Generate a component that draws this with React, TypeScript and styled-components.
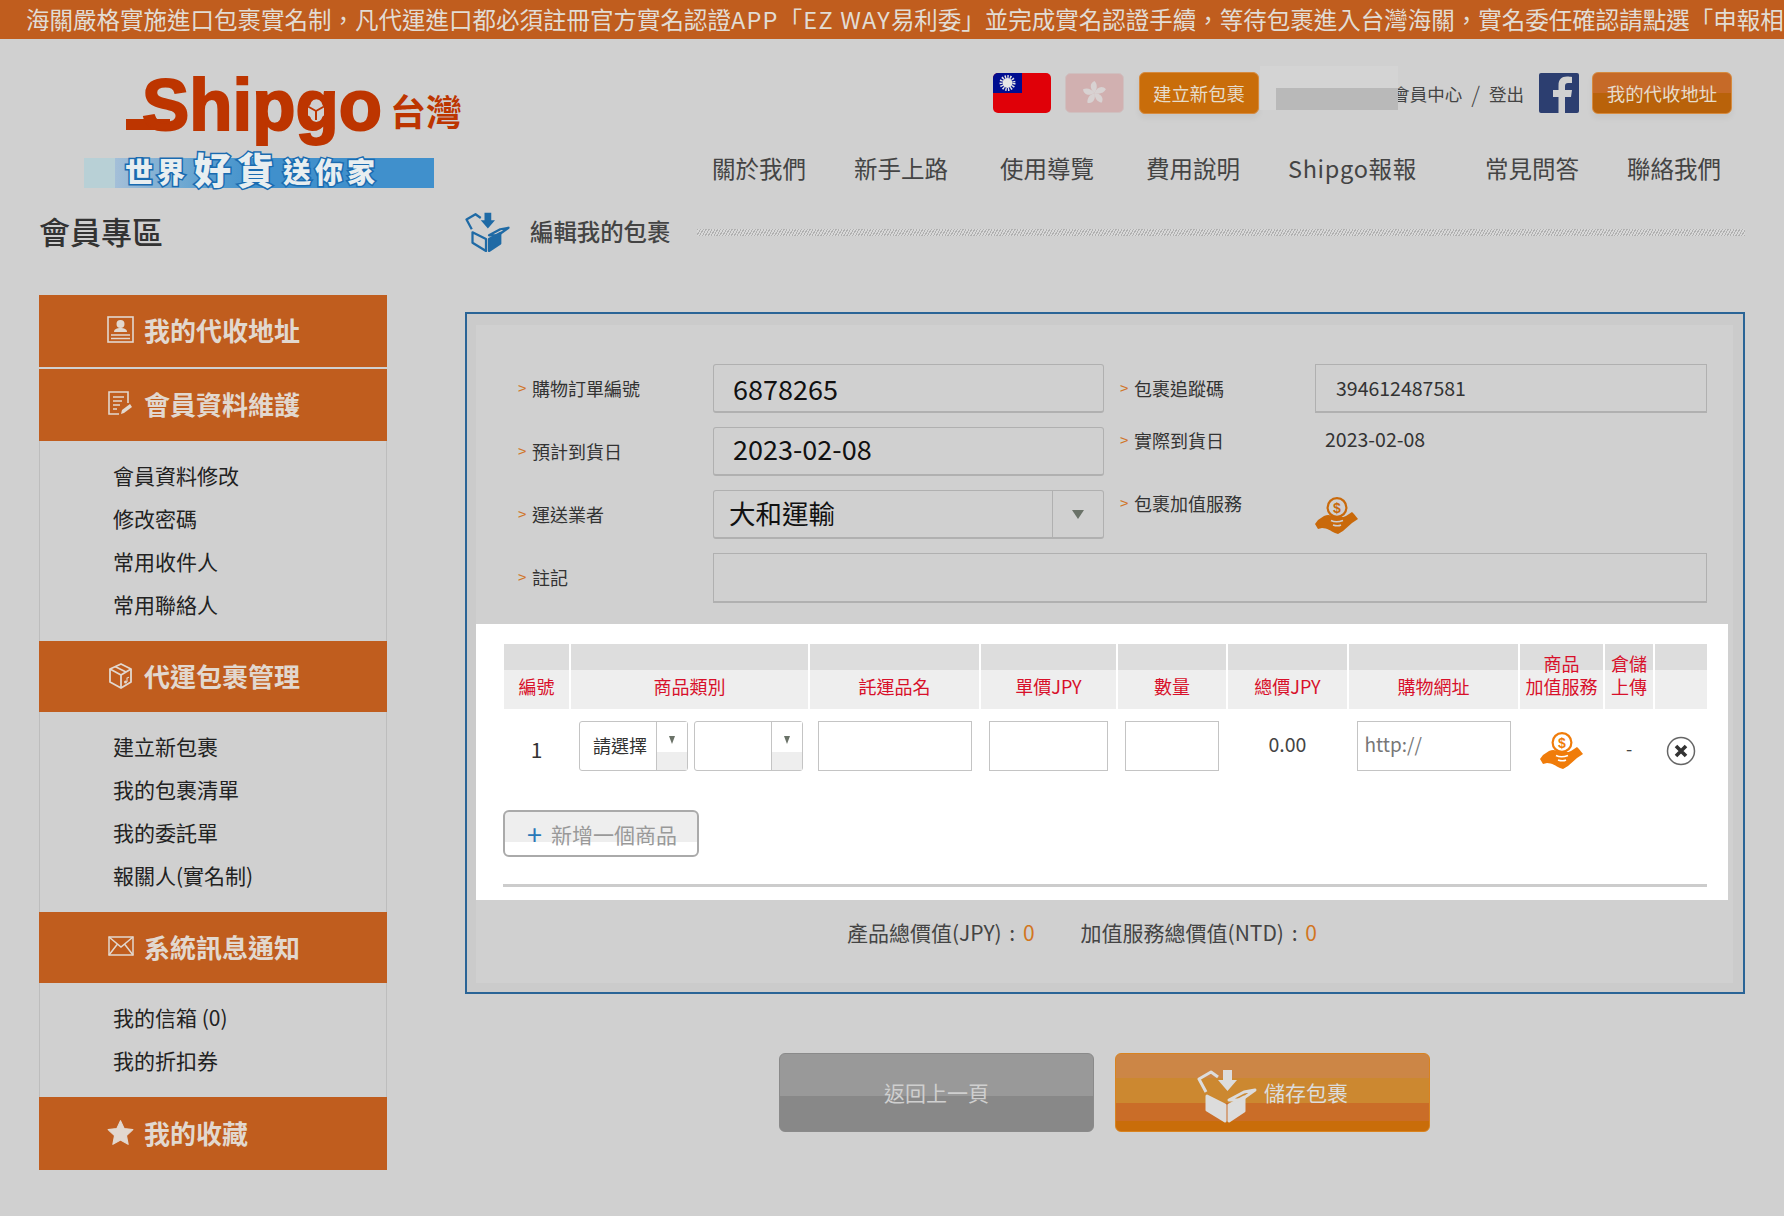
import { FC } from 'react';
import styled, { createGlobalStyle } from 'styled-components';

const cjk = '"Noto Sans CJK TC", "Noto Sans", sans-serif';
const orange = '#c05d1e';

const GlobalStyle = createGlobalStyle`
  html, body {
    margin: 0;
    padding: 0;
    background: #d0d0d0;
    font-family: ${ cjk };
    color: #333;
  }
  * {
    box-sizing: border-box;
  }
`;

const menu = [
  { icon: 'card', title: '我的代收地址', height: 72, items: [] },
  { icon: 'edit', title: '會員資料維護', height: 72, items: [ '會員資料修改', '修改密碼', '常用收件人', '常用聯絡人' ] },
  { icon: 'box', title: '代運包裹管理', height: 71, items: [ '建立新包裹', '我的包裹清單', '我的委託單', '報關人(實名制)' ] },
  { icon: 'mail', title: '系統訊息通知', height: 71, items: [ '我的信箱 (0)', '我的折扣券' ] },
  { icon: 'star', title: '我的收藏', height: 73, items: [] },
];

const navItems = [
  { label: '關於我們', gap: 0, spacing: 0 },
  { label: '新手上路', gap: 48, spacing: 0 },
  { label: '使用導覽', gap: 52, spacing: 0 },
  { label: '費用說明', gap: 52, spacing: 0 },
  { label: 'Shipgo報報', gap: 48, spacing: 0.7 },
  { label: '常見問答', gap: 68, spacing: 0 },
  { label: '聯絡我們', gap: 48, spacing: 0 },
];

const LogoMark: FC = () => (
  <LogoSvg width="378" height="112" viewBox="0 0 378 112">
    <defs>
      <linearGradient id="band" x1="0" x2="1" y1="0" y2="0">
        <stop offset="0" stopColor="#a4bfd8" />
        <stop offset="0.3" stopColor="#5a9fcf" />
        <stop offset="0.45" stopColor="#4090cc" />
      </linearGradient>
    </defs>
    <rect x="42" y="41" width="44" height="11" fill="#bd3500" />
    <text x="58" y="52" fontFamily="Liberation Sans" fontWeight="700" fontSize="72" fill="#bd3500" stroke="#bd3500" strokeWidth="2" textLength="240" lengthAdjust="spacingAndGlyphs">Shipgo</text>
    <path d="M232 24l8 4.500v9l-8 4.500-8-4.500v-9z" fill="#d0d0d0" />
    <path d="M232 33l-8-4.500M232 33l8-4.500M232 33v9" stroke="#bd3500" strokeWidth="2" fill="none" />
    <text x="306" y="48" fontFamily="Noto Sans CJK TC" fontWeight="700" fontSize="36" fill="#bd3500">台灣</text>
    <rect x="0" y="80" width="31" height="30" fill="#b8d0d6" />
    <rect x="31" y="80" width="319" height="30" fill="url(#band)" />
    <g fontFamily="Noto Sans CJK TC" fontWeight="900" fill="#e8eef0" stroke="#1a6bb0" strokeWidth="3" style={ { paintOrder: 'stroke' } }>
      <text x="41" y="105" fontSize="28" letterSpacing="4">世界</text>
      <text x="110" y="107" fontSize="37" letterSpacing="6">好貨</text>
      <text x="199" y="105" fontSize="28" letterSpacing="4">送你家</text>
    </g>
  </LogoSvg>
);

const TaiwanFlag: FC = () => (
  <svg width="58" height="40" viewBox="0 0 58 40">
    <rect width="58" height="40" rx="5" fill="#e00008" />
    <path d="M5 0H29V20H0V5a5 5 0 0 1 5-5z" fill="#000d90" />
    <circle cx="14.500" cy="10" r="6.500" fill="none" stroke="#e6e6e6" strokeWidth="3" strokeDasharray="1.400 1.300" />
    <circle cx="14.500" cy="10" r="5" fill="#e6e6e6" />
  </svg>
);

const HongKongFlag: FC = () => (
  <svg width="59" height="40" viewBox="0 0 59 40">
    <rect x="0.500" y="0.500" width="58" height="39" rx="5" fill="#d1b0b0" stroke="#cfc0c0" />
    <g fill="#d8d2d2" transform="translate(29.500 20)">
      <path d="M0 0C-5-4-5-10 0-12 3-9 3-4 0 0z" />
      <path d="M0 0C-5-4-5-10 0-12 3-9 3-4 0 0z" transform="rotate(72)" />
      <path d="M0 0C-5-4-5-10 0-12 3-9 3-4 0 0z" transform="rotate(144)" />
      <path d="M0 0C-5-4-5-10 0-12 3-9 3-4 0 0z" transform="rotate(216)" />
      <path d="M0 0C-5-4-5-10 0-12 3-9 3-4 0 0z" transform="rotate(288)" />
    </g>
  </svg>
);

const FacebookTile: FC = () => (
  <svg width="40" height="40" viewBox="0 0 40 40">
    <rect width="40" height="40" rx="2" fill="#2c3e70" />
    <path d="M26 40V24h6l1-7h-7v-4c0-2 1-3 3-3h4V4c-1-.2-3-.4-5-.4-5.500 0-8.500 3.200-8.500 8.800V17H14v7h5.500v16z" fill="#d0d0d0" />
  </svg>
);

const MenuIcon: FC<{ name: string }> = ( { name } ) => {
  if ( name === 'card' ) {
    return (
      <svg width="27" height="27" viewBox="0 0 27 27" fill="none" stroke="#e2d8cf" strokeWidth="1.600">
        <rect x="1" y="1" width="25" height="25" />
        <circle cx="13.500" cy="8" r="3.200" fill="#e2d8cf" />
        <path d="M7 16c0-3 3-4 6.500-4s6.500 1 6.500 4z" fill="#e2d8cf" stroke="none" />
        <path d="M4 19h19M4 22.500h19" />
      </svg>
    );
  }
  if ( name === 'edit' ) {
    return (
      <svg width="27" height="27" viewBox="0 0 27 27" fill="none" stroke="#e2d8cf" strokeWidth="1.600">
        <path d="M21 13V2H2v22h10" />
        <path d="M6 7h11M6 11h9M6 15h7M6 19h4" />
        <path d="M14 24l1-4 8-6 2 3-8 6z" fill="#e2d8cf" stroke="none" />
      </svg>
    );
  }
  if ( name === 'box' ) {
    return (
      <svg width="27" height="27" viewBox="0 0 27 27" fill="none" stroke="#e2d8cf" strokeWidth="1.800" strokeLinejoin="round">
        <path d="M3 7l11-5 10 5v13l-10 6-11-6z" />
        <path d="M3 7l11 6 10-6M14 13v13M8 4.500l11 5.500" />
        <circle cx="18.500" cy="20" r="1.500" fill="#e2d8cf" stroke="none" />
        <path d="M20 20v-4l2-.8" strokeWidth="1.100" />
      </svg>
    );
  }
  if ( name === 'mail' ) {
    return (
      <svg width="26" height="20" viewBox="0 0 26 20" fill="none" stroke="#e2d8cf" strokeWidth="1.500">
        <rect x="1" y="1" width="24" height="18" />
        <path d="M1 1l12 10L25 1M1 19l8.500-11M25 19l-8.500-11" />
      </svg>
    );
  }
  return (
    <svg width="27" height="27" viewBox="0 0 24 24" fill="#e2d8cf" stroke="#e2d8cf" strokeWidth="1" strokeLinejoin="round">
      <path d="M12 1.500l3.200 7 7.800.9-5.700 5.300 1.500 7.800L12 18.700l-6.800 3.800 1.500-7.800L1 9.400l7.800-.9z" />
    </svg>
  );
};

const CoinHand: FC<{ color: string; bg: string }> = ( { color, bg } ) => (
  <svg width="43" height="37" viewBox="0 0 43 37">
    <circle cx="22" cy="10.500" r="9.400" fill="none" stroke={ color } strokeWidth="2.200" />
    <text x="22" y="15.500" textAnchor="middle" fontFamily="Liberation Sans" fontWeight="700" fontSize="14" fill={ color }>$</text>
    <path d="M0 27l3-4 6-4c4-2 7-1 10 1h7c2 0 3 0 5-1l6-4 2 2 4 5-6 4-9 8-5 3-3-1c-4-2-8-5-13-5l-4 1z" fill={ color } />
    <path d="M16 23.500c3 1.500 8 1.500 12 0M18 28c3 1 6 1 8 0" fill="none" stroke={ bg } strokeWidth="1.600" />
  </svg>
);

const OpenBox: FC<{ size: number; color: string; outlined?: boolean }> = ( { size, color, outlined } ) => (
  <svg width={ size } height={ size * 0.9 } viewBox="0 0 60 54" fill="none" stroke={ color } strokeWidth="3" strokeLinejoin="round">
    <path d="M10 27l18 9v16L10 41z" fill={ outlined ? 'none' : color } />
    <path d="M32 36l15-8v14L32 52z" fill={ color } />
    <path d="M9 23L2 10 14 3l7 5" />
    <path d="M32 31l15-8 11-2-14 10z" />
    <path d="M26 1h9v10h5L30.500 22 21 11h5z" fill={ color } stroke="none" />
  </svg>
);

const RemoveIcon: FC = () => (
  <svg width="30" height="30" viewBox="0 0 30 30">
    <circle cx="15" cy="15" r="13.500" fill="#fff" stroke="#666" strokeWidth="1.500" />
    <path d="M10 10l10 10M20 10L10 20" stroke="#333" strokeWidth="3.600" />
  </svg>
);

const App: FC = () => (
  <>
    <GlobalStyle />
    <Banner>
      海關嚴格實施進口包裹實名制，凡代運進口都必須註冊官方實名認證<BannerLatin>APP「EZ WAY</BannerLatin>易利委」並完成實名認證手續，等待包裹進入台灣海關，實名委任確認請點選「申報相
    </Banner>
    <Header>
      <LogoWrap><LogoMark /></LogoWrap>
      <HeaderRight>
        <ActionRow>
          <TaiwanFlag />
          <HongKongFlag />
          <ActionButton>建立新包裹</ActionButton>
          <MemberBox>
            <MemberLink>會員中心</MemberLink>
            <MemberSlash>/</MemberSlash>
            <MemberLink>登出</MemberLink>
            <RedactOuter><RedactInner /></RedactOuter>
          </MemberBox>
          <FacebookTile />
          <ActionButton $dark>我的代收地址</ActionButton>
        </ActionRow>
        <Nav>
          { navItems.map( ( item ) => (
            <NavItem key={ item.label } $gap={ item.gap } $spacing={ item.spacing }>{ item.label }</NavItem>
          ) ) }
        </Nav>
      </HeaderRight>
    </Header>
    <Page>
      <Aside>
        <AsideTitle>會員專區</AsideTitle>
        <div>
          { menu.map( ( group, index ) => (
            <div key={ group.title }>
              <MenuHead $first={ index === 0 } $height={ group.height }>
                <MenuIconSlot><MenuIcon name={ group.icon } /></MenuIconSlot>
                { group.title }
              </MenuHead>
              { group.items.length > 0 && (
                <MenuList>
                  { group.items.map( ( item ) => <MenuItem key={ item }>{ item }</MenuItem> ) }
                </MenuList>
              ) }
            </div>
          ) ) }
        </div>
      </Aside>
      <Main>
        <TitleRow>
          <OpenBox size={ 45 } color="#1f6aa5" outlined />
          <MainTitle>編輯我的包裹</MainTitle>
          <Hatch />
        </TitleRow>
        <Panel>
          <PanelInner>
            <FormGrid>
              <Label><Chevron>&gt;</Chevron>購物訂單編號</Label>
              <TextBox $big $lineHeight={ 48 }>6878265</TextBox>
              <Label><Chevron>&gt;</Chevron>包裹追蹤碼</Label>
              <TextBox $square $lineHeight={ 46 }>394612487581</TextBox>

              <Label><Chevron>&gt;</Chevron>預計到貨日</Label>
              <TextBox $big $lineHeight={ 42 }>2023-02-08</TextBox>
              <Label $top><Chevron>&gt;</Chevron>實際到貨日</Label>
              <PlainValue>2023-02-08</PlainValue>

              <Label><Chevron>&gt;</Chevron>運送業者</Label>
              <SelectBox>
                <SelectText>大和運輸</SelectText>
                <SelectArrow><Triangle /></SelectArrow>
              </SelectBox>
              <Label $top><Chevron>&gt;</Chevron>包裹加值服務</Label>
              <ServiceIcon><CoinHand color="#c9690a" bg="#d0d0d0" /></ServiceIcon>

              <Label><Chevron>&gt;</Chevron>註記</Label>
              <NoteBox />
            </FormGrid>

            <WhiteCard>
              <ItemGrid>
                <HeadCell>編號</HeadCell>
                <HeadCell>商品類別</HeadCell>
                <HeadCell>託運品名</HeadCell>
                <HeadCell>單價JPY</HeadCell>
                <HeadCell>數量</HeadCell>
                <HeadCell>總價JPY</HeadCell>
                <HeadCell>購物網址</HeadCell>
                <HeadCell>商品<br />加值服務</HeadCell>
                <HeadCell>倉儲<br />上傳</HeadCell>
                <HeadCell />

                <NumberCell>1</NumberCell>
                <CategoryCell>
                  <MiniSelect>
                    <MiniText>請選擇</MiniText>
                    <MiniArrow><Triangle $small /></MiniArrow>
                  </MiniSelect>
                  <MiniSelect>
                    <MiniText />
                    <MiniArrow><Triangle $small /></MiniArrow>
                  </MiniSelect>
                </CategoryCell>
                <BoxCell><RowInput $w={ 154 } /></BoxCell>
                <BoxCell><RowInput $w={ 119 } /></BoxCell>
                <BoxCell><RowInput $w={ 94 } /></BoxCell>
                <TotalCell>0.00</TotalCell>
                <BoxCell><RowInput $w={ 154 }><UrlHint>http://</UrlHint></RowInput></BoxCell>
                <IconCell><CoinHand color="#f07c0a" bg="#ffffff" /></IconCell>
                <DashCell>-</DashCell>
                <RemoveCell><RemoveIcon /></RemoveCell>
              </ItemGrid>
              <AddButton><AddPlus>+</AddPlus>新增一個商品</AddButton>
              <CardRule />
            </WhiteCard>

            <Totals>
              <span>產品總價值(JPY) : <TotalValue>0</TotalValue></span>
              <span>加值服務總價值(NTD) : <TotalValue>0</TotalValue></span>
            </Totals>
          </PanelInner>
        </Panel>
        <ButtonRow>
          <BackButton>返回上一頁</BackButton>
          <SaveButton>
            <SaveIconSlot><OpenBox size={ 60 } color="#dcdcdc" /></SaveIconSlot>
            儲存包裹
          </SaveButton>
        </ButtonRow>
      </Main>
    </Page>
  </>
);

export default App;

const LogoSvg = styled.svg`
  overflow: visible;
`;
const Banner = styled.div`
  height: 39px;
  padding-left: 26px;
  background: ${ orange };
  color: #e2dcd4;
  font-size: 23.500px;
  line-height: 39px;
  white-space: nowrap;
  overflow: hidden;
`;
const BannerLatin = styled.span`
  letter-spacing: 1.200px;
`;
const Header = styled.header`
  display: flex;
  justify-content: space-between;
  height: 171px;
`;
const LogoWrap = styled.div`
  margin-top: 39px;
  margin-left: 84px;
  height: 112px;
`;
const HeaderRight = styled.div`
  display: flex;
  flex-direction: column;
  align-items: flex-end;
  padding-top: 33px;
  padding-right: 52px;
`;
const ActionRow = styled.div`
  display: flex;
  align-items: center;
  height: 42px;
  & > svg:nth-child(2) {
    margin: 0 15px 0 14px;
  }
  & > svg:nth-child(5) {
    margin: 0 13px 0 15px;
  }
`;
const ActionButton = styled.div<{ $dark?: boolean }>`
  display: flex;
  align-items: center;
  justify-content: center;
  width: ${ ( p ) => ( p.$dark ? '140px' : '120px' ) };
  height: 42px;
  border: 1px solid #d68a3e;
  border-radius: 6px;
  background: ${ ( p ) => ( p.$dark ? 'linear-gradient(#c66a28 0 50%, #b9620a 50%)' : '#c96d0a' ) };
  box-shadow: 0 4px 6px rgba(0, 0, 0, 0.05);
  color: #e6dccb;
  font-size: 18.400px;
`;
const MemberBox = styled.div`
  position: relative;
  display: flex;
  align-items: center;
  justify-content: flex-end;
  width: 265px;
  height: 42px;
  color: #444;
  font-size: 17.500px;
`;
const MemberLink = styled.span`
  white-space: nowrap;
`;
const MemberSlash = styled.span`
  margin: 0 9px 0 9px;
  font-size: 22px;
  font-weight: 300;
`;
const RedactOuter = styled.div`
  position: absolute;
  left: 1px;
  top: -6px;
  width: 138px;
  height: 44px;
  background: #d4d4d4;
`;
const RedactInner = styled.div`
  position: absolute;
  left: 16px;
  top: 22px;
  width: 122px;
  height: 22px;
  background: #b9b9b9;
`;
const Nav = styled.nav`
  display: flex;
  margin-top: 37px;
  padding-right: 11px;
`;
const NavItem = styled.div<{ $gap: number; $spacing: number }>`
  margin-left: ${ ( p ) => p.$gap }px;
  color: #444;
  font-size: 23.500px;
  letter-spacing: ${ ( p ) => p.$spacing }px;
  line-height: 34px;
  white-space: nowrap;
`;
const Page = styled.div`
  display: flex;
  padding-left: 39px;
`;
const Aside = styled.aside`
  width: 348px;
`;
const AsideTitle = styled.h2`
  margin: 0 0 41px;
  height: 44px;
  color: #333;
  font-size: 31px;
  font-weight: 500;
  line-height: 42px;
`;
const MenuHead = styled.div<{ $first: boolean; $height: number }>`
  display: flex;
  align-items: center;
  height: ${ ( p ) => p.$height }px;
  margin-bottom: ${ ( p ) => ( p.$first ? '2px' : '0' ) };
  padding-left: 68px;
  padding-bottom: 3px;
  background: ${ orange };
  color: #e2d8cf;
  font-size: 26px;
  font-weight: 700;
`;
const MenuIconSlot = styled.span`
  display: flex;
  justify-content: center;
  width: 27px;
  margin-right: 10px;
`;
const MenuList = styled.div`
  padding: 14px 0;
  border-left: 1px solid #bdbdbd;
  border-right: 1px solid #bdbdbd;
`;
const MenuItem = styled.div`
  height: 43px;
  padding-left: 73px;
  color: #222;
  font-size: 21px;
  line-height: 41px;
`;
const Main = styled.main`
  width: 1280px;
  margin-left: 78px;
`;
const TitleRow = styled.div`
  display: flex;
  align-items: center;
  height: 44px;
  margin-bottom: 58px;
`;
const MainTitle = styled.h1`
  margin: 0 27px 2px 20px;
  color: #444;
  font-size: 23.400px;
  font-weight: 500;
  white-space: nowrap;
`;
const Hatch = styled.div`
  flex: 1;
  height: 7px;
  background: repeating-linear-gradient(-60deg, #b0b0b0 0 1px, #d8d8d8 1px 2.500px);
`;
const Panel = styled.section`
  height: 682px;
  padding: 11px 10px 9px 9px;
  border: 2px solid #2a6496;
  background: #cbcbcb;
`;
const PanelInner = styled.div`
  height: 100%;
  background: #d0d0d0;
`;
const FormGrid = styled.div`
  display: grid;
  grid-template-columns: 179px 391px 179px 392px;
  grid-auto-rows: 49px;
  column-gap: 16px;
  row-gap: 14px;
  padding: 39px 0 0 42px;
  height: 299px;
`;
const Label = styled.div<{ $top?: boolean }>`
  display: flex;
  align-items: center;
  align-self: ${ ( p ) => ( p.$top ? 'start' : 'center' ) };
  padding-bottom: 2px;
  color: #333;
  font-size: 18px;
  line-height: 26px;
`;
const Chevron = styled.span`
  width: 14px;
  color: #d0762a;
  font-size: 15px;
`;
const TextBox = styled.div<{ $big?: boolean; $square?: boolean; $lineHeight: number }>`
  height: 49px;
  padding-left: ${ ( p ) => ( p.$big ? '19px' : '20px' ) };
  border: 1px solid #b0b0b0;
  border-bottom-width: 2px;
  border-radius: ${ ( p ) => ( p.$square ? '0' : '3px' ) };
  color: ${ ( p ) => ( p.$big ? '#111' : '#333' ) };
  font-size: ${ ( p ) => ( p.$big ? '27px' : '19.500px' ) };
  line-height: ${ ( p ) => p.$lineHeight }px;
`;
const PlainValue = styled.div`
  padding-left: 10px;
  color: #333;
  font-size: 19.500px;
  line-height: 24px;
`;
const SelectBox = styled.div`
  display: flex;
  height: 49px;
  border: 1px solid #b0b0b0;
  border-bottom-width: 2px;
  border-radius: 3px;
`;
const SelectText = styled.div`
  flex: 1;
  padding-left: 15px;
  color: #111;
  font-size: 26.500px;
  line-height: 44px;
`;
const SelectArrow = styled.div`
  display: flex;
  align-items: center;
  justify-content: center;
  width: 51px;
  border-left: 1px solid #b0b0b0;
`;
const Triangle = styled.span<{ $small?: boolean }>`
  width: 0;
  height: 0;
  border-left: ${ ( p ) => ( p.$small ? 3.500 : 6.500 ) }px solid transparent;
  border-right: ${ ( p ) => ( p.$small ? 3.500 : 6.500 ) }px solid transparent;
  border-top: ${ ( p ) => ( p.$small ? 8 : 9 ) }px solid #6a7268;
`;
const ServiceIcon = styled.div`
  margin-top: 7px;
`;
const NoteBox = styled.div`
  grid-column: 2 / 5;
  height: 50px;
  border: 1px solid #b0b0b0;
  border-bottom-width: 2px;
`;
const WhiteCard = styled.div`
  width: 1252px;
  height: 276px;
  padding: 20px 21px 0 27px;
  background: #fff;
`;
const ItemGrid = styled.div`
  display: grid;
  grid-template-columns: 65px 237px 169px 135px 108px 119px 169px 83px 48px 52px;
  column-gap: 2px;
  margin-left: 1px;
  width: 1203px;
`;
const HeadCell = styled.div`
  height: 65px;
  padding-bottom: 11px;
  display: flex;
  flex-direction: column;
  justify-content: flex-end;
  background: linear-gradient(#dddddd 0 26px, #eeeeee 26px);
  color: #d8102a;
  font-size: 18px;
  line-height: 23px;
  text-align: center;
`;
const BodyCell = styled.div`
  height: 76px;
  padding-top: 12px;
`;
const NumberCell = styled( BodyCell )`
  color: #333;
  font-size: 21px;
  line-height: 56px;
  text-align: center;
`;
const CategoryCell = styled( BodyCell )`
  display: flex;
  gap: 6px;
  padding-left: 8px;
`;
const MiniSelect = styled.div`
  display: flex;
  width: 109px;
  height: 50px;
  border: 1.500px solid #c4c4c4;
  border-radius: 3px;
`;
const MiniText = styled.div`
  flex: 1;
  padding-left: 4px;
  color: #333;
  font-size: 18px;
  line-height: 46px;
  text-align: center;
`;
const MiniArrow = styled.div`
  display: flex;
  justify-content: center;
  width: 31px;
  padding-top: 14px;
  border-left: 1.500px solid #c4c4c4;
  background: linear-gradient(#fff 0 30px, #eeeeee 30px);
`;
const BoxCell = styled( BodyCell )`
  display: flex;
  justify-content: center;
`;
const RowInput = styled.div<{ $w: number }>`
  width: ${ ( p ) => p.$w }px;
  height: 50px;
  padding-left: 7px;
  border: 1.500px solid #c4c4c4;
`;
const UrlHint = styled.span`
  color: #777;
  font-size: 19px;
  line-height: 44px;
`;
const TotalCell = styled( BodyCell )`
  color: #444;
  font-size: 19.500px;
  line-height: 46px;
  text-align: center;
`;
const IconCell = styled( BodyCell )`
  display: flex;
  justify-content: center;
  padding-top: 23px;
`;
const DashCell = styled( BodyCell )`
  color: #444;
  font-size: 18px;
  line-height: 54px;
  text-align: center;
`;
const RemoveCell = styled( BodyCell )`
  display: flex;
  justify-content: center;
  padding-top: 27px;
`;
const AddButton = styled.div`
  display: flex;
  align-items: center;
  width: 196px;
  height: 47px;
  margin-top: 25px;
  padding-left: 22px;
  border: 2px solid #aaaaaa;
  border-radius: 6px;
  background: linear-gradient(#eeeeee 0 30px, #ffffff 30px);
  color: #999;
  font-size: 21px;
`;
const AddPlus = styled.span`
  margin-right: 9px;
  color: #2a78b8;
  font-size: 27px;
  line-height: 24px;
`;
const CardRule = styled.div`
  width: 1204px;
  height: 3px;
  margin-top: 27px;
  background: #cccccc;
`;
const Totals = styled.div`
  display: flex;
  gap: 46px;
  padding: 19px 0 0 371px;
  color: #444;
  font-size: 21px;
  line-height: 26px;
  word-spacing: 3px;
`;
const TotalValue = styled.span`
  color: #d2761f;
`;
const ButtonRow = styled.div`
  display: flex;
  gap: 21px;
  margin-top: 59px;
  margin-left: 314px;
`;
const BackButton = styled.div`
  display: flex;
  align-items: center;
  justify-content: center;
  width: 315px;
  height: 79px;
  padding-bottom: 2px;
  border: 1px solid #8a8a8a;
  border-radius: 6px;
  background: linear-gradient(#999999 0 42px, #888888 42px);
  color: #cfcfcf;
  font-size: 21px;
`;
const SaveButton = styled.div`
  display: flex;
  align-items: center;
  justify-content: center;
  gap: 7px;
  width: 315px;
  height: 79px;
  padding-bottom: 2px;
  border: 1px solid #d9831f;
  border-radius: 6px;
  background: linear-gradient(#cc8646 0 24px, #cc8830 24px 49px, #ca6d28 49px 67px, #c96d0a 67px);
  color: #dcdcdc;
  font-size: 21px;
`;
const SaveIconSlot = styled.span`
  display: flex;
  margin-top: 8px;
`;
